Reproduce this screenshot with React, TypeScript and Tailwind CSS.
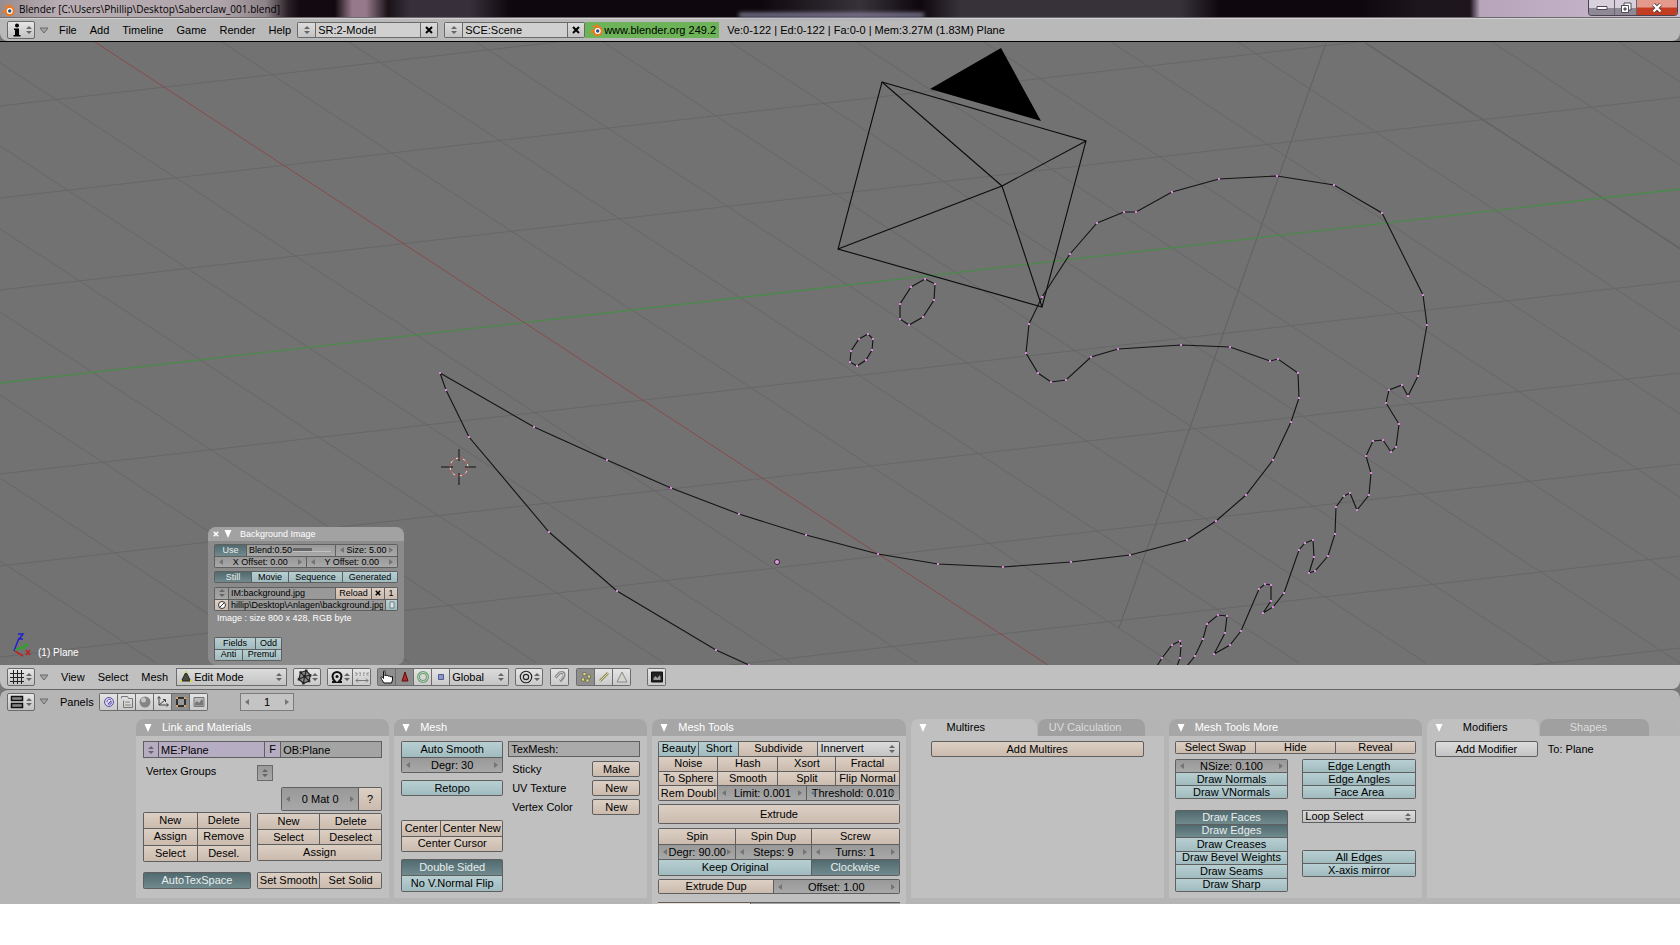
import type { ReactNode } from "react";
import { clsx } from "clsx";

type Tone = "tan" | "teal" | "on" | "grey" | "light" | "purple";

const tones: Record<Tone, string> = {
  tan: "bg-linear-to-b from-[#dccfc4] to-[#cbbbae] text-black",
  teal: "bg-linear-to-b from-[#b8cfd2] to-[#a0bbbf] text-black",
  on: "bg-linear-to-b from-[#516a6f] to-[#708a8e] text-[#e8eeee]",
  grey: "bg-linear-to-b from-[#999999] to-[#a8a8a8] text-black",
  light: "bg-linear-to-b from-[#dcdcdc] to-[#c4c4c4] text-black",
  purple: "bg-[#b7adc2] text-black",
};

function Btn({ tone = "tan", children, className, label }: { tone?: Tone; children?: ReactNode; className?: string; label?: string }) {
  return (
    <button
      type="button"
      aria-label={label}
      aria-pressed={tone === "on" ? true : undefined}
      className={clsx("flex min-h-0 min-w-0 items-center justify-center overflow-hidden whitespace-nowrap leading-none", tones[tone], className)}
    >
      {children}
    </button>
  );
}

function Group({ children, className }: { children: ReactNode; className?: string }) {
  return <div className={clsx("flex flex-col gap-px rounded-xs bg-[#5f5f5f] p-px", className)}>{children}</div>;
}

function Row({ children, cols }: { children: ReactNode; cols: string }) {
  return <div className={clsx("grid min-h-0 flex-1 gap-px", cols)}>{children}</div>;
}

function Num({ value, plain }: { value: string; plain?: boolean }) {
  return (
    <div className={clsx("relative flex min-h-0 min-w-0 items-stretch", plain ? "bg-[#c4c4c4]" : tones.grey)}>
      <input aria-label={value.split(":")[0]} defaultValue={value} className="h-full w-full min-w-0 bg-transparent text-center leading-none outline-none" />
      <svg viewBox="0 0 4 6" className="pointer-events-none absolute inset-y-0 left-1 my-auto h-1.5 w-1 fill-[#747474]">
        <path d="M4 0v6L0 3z" />
      </svg>
      <svg viewBox="0 0 4 6" className="pointer-events-none absolute inset-y-0 right-1 my-auto h-1.5 w-1 fill-[#747474]">
        <path d="M0 0v6l4-3z" />
      </svg>
    </div>
  );
}

function Field({ value, label, className }: { value: string; label: string; className?: string }) {
  return <input aria-label={label} defaultValue={value} className={clsx("h-full w-full min-w-0 px-0.5 leading-none outline-none", className)} />;
}

function UpDown({ className }: { className?: string }) {
  return (
    <svg viewBox="0 0 6 8" className={clsx("h-2 w-1.5 shrink-0 fill-[#666]", className)}>
      <path d="M3 0l3 3H0zM0 5h6L3 8z" />
    </svg>
  );
}

function Drop({ options, label, className }: { options: string[]; label: string; className?: string }) {
  return (
    <div className="relative min-h-0 min-w-0">
      <select aria-label={label} className={clsx("block h-full w-full appearance-none leading-none outline-none", tones.light, className)}>
        {options.map((o) => (
          <option key={o}>{o}</option>
        ))}
      </select>
      <UpDown className="pointer-events-none absolute inset-y-0 right-1 my-auto" />
    </div>
  );
}

function Triangle({ className }: { className?: string }) {
  return (
    <svg viewBox="0 0 8 8" className={clsx("h-2 w-2 shrink-0", className)}>
      <path d="M.5 0h7L4 8z" />
    </svg>
  );
}

function EditorType({ label, children }: { label: string; children: ReactNode }) {
  return (
    <button type="button" aria-label={label} className="flex h-[18px] w-7 shrink-0 items-center justify-between rounded-xs border border-[#6a6a6a] bg-linear-to-b from-[#e6e6e6] to-[#c2c2c2] px-0.5">
      {children}
      <UpDown />
    </button>
  );
}

function Collapse() {
  return (
    <button type="button" aria-label="Collapse menus" className="ml-1 flex h-4 w-3 shrink-0 items-center">
      <svg viewBox="0 0 10 7" className="h-[7px] w-2.5 fill-[#a4a4a4] stroke-[#6a6a6a]">
        <path d="M1 1h8L5 6z" />
      </svg>
    </button>
  );
}

function Menu({ items, className }: { items: string[]; className?: string }) {
  return (
    <nav className={clsx("flex shrink-0 gap-[13px]", className)}>
      {items.map((item) => (
        <button key={item} type="button" className="leading-4">
          {item}
        </button>
      ))}
    </nav>
  );
}

function BlenderLogo({ className }: { className?: string }) {
  return (
    <svg viewBox="0 0 14 12" className={clsx("h-3 w-3.5 shrink-0", className)}>
      <path d="M1 8l6-5H3V1.800h5L7 .6 8 0l5 4.200C15 8 12 12 8.500 12 5.500 12 4 10 4 8L2 9.200z" fill="#ee7a1c" />
      <circle cx="8.700" cy="7" r="3" fill="#fff" />
      <circle cx="8.700" cy="7" r="1.700" fill="#1f4f86" />
    </svg>
  );
}

function TitleBar() {
  return (
    <header className="relative flex h-[18px] items-start border-b border-[#6d6a6e] bg-[linear-gradient(90deg,#978d91_0,#b8adb2_60px,#b0a5ab_220px,#8d8288_266px,#2a2026_288px,#120a10_300px,#120a10_335px,#96798a_352px,#96798a_366px,#1a1217_388px,#37303a_410px,#37303a_470px,#0e070d_510px,#0e070d_760px,#37323a_860px,#0e070d_920px,#37323a_960px,#37323a_1080px,#37323a_1180px,#0e070d_1220px,#0e070d_1360px,#1d161d_1420px,#1d161d_1470px,#b7a4bb_1480px,#cdbdd0_1680px)]">
      <BlenderLogo className="mt-1 ml-px" />
      <h1 className="ml-1 font-['Open_Sans',sans-serif] text-[10px] leading-[18px] text-black">Blender [C:\Users\Phillip\Desktop\Saberclaw_001.blend]</h1>
      <div className="absolute bottom-0 left-[44%] h-1 w-[11%] bg-[#8d88a6] blur-[2px]" />
      <div className="mr-0.5 ml-auto flex h-4 overflow-hidden rounded-b-[4px] border border-t-0 border-[#4b4450]">
        <button type="button" aria-label="Minimize" className="flex w-[26px] items-center justify-center border-r border-[#6b6470] bg-linear-to-b from-[#d8d0dc] from-50% to-[#8f8896] to-55%">
          <svg viewBox="0 0 12 6" className="h-1.5 w-3">
            <path d="M1 1.500h10v3H1z" fill="#fff" stroke="#4e4a55" />
          </svg>
        </button>
        <button type="button" aria-label="Restore" className="flex w-[22px] items-center justify-center border-r border-[#6b6470] bg-linear-to-b from-[#d8d0dc] from-50% to-[#8f8896] to-55%">
          <svg viewBox="0 0 12 12" className="h-3 w-3" fill="#fff" stroke="#4e4a55">
            <path d="M4 1h7v7H4z" />
            <path d="M1.500 3.500h7v7h-7z" />
            <path d="M4 6h2v2H4z" fill="#7c7684" />
          </svg>
        </button>
        <button type="button" aria-label="Close" className="flex w-10 items-center justify-center bg-linear-to-b from-[#e39a8c] from-45% to-[#c33d22] to-55%">
          <svg viewBox="0 0 12 10" className="h-2.5 w-3">
            <path d="M2.500 1.500l7 7m0-7l-7 7" stroke="#5c3a3a" strokeWidth="4" />
            <path d="M2.500 1.500l7 7m0-7l-7 7" stroke="#fff" strokeWidth="2.400" />
          </svg>
        </button>
      </div>
    </header>
  );
}

function DataBlock({ label, value }: { label: string; value: string }) {
  return (
    <div className="grid h-4 w-[141px] shrink-0 grid-cols-[17px_1fr_16px] gap-px rounded-xs bg-[#6a6a6a] p-px">
      <Btn tone="light" label={`Browse ${label}`}>
        <UpDown />
      </Btn>
      <Field label={label} value={value} className="bg-[#d0d0d0]" />
      <Btn tone="light" label={`Delete ${label}`}>
        <svg viewBox="0 0 8 8" className="h-2 w-2 stroke-black stroke-2">
          <path d="M1 1l6 6M7 1l-6 6" />
        </svg>
      </Btn>
    </div>
  );
}

function InfoHeader() {
  return (
    <div className="bg-[#777]">
      <div className="flex h-[23px] items-center rounded-b-lg border-t border-[#d2d2d2] bg-[#b9b9b9] pl-[7px]">
        <EditorType label="Editor type: info">
          <svg viewBox="0 0 14 14" className="h-3.5 w-3.5 fill-black">
            <circle cx="7" cy="2.500" r="2" />
            <path d="M4 5.500h5V12h1.500v1.500h-7V12H5V7H4z" />
          </svg>
        </EditorType>
        <Collapse />
        <Menu items={["File", "Add", "Timeline", "Game", "Render", "Help"]} className="ml-2" />
        <div className="ml-1.5 flex shrink-0 gap-1.5">
          <DataBlock label="Screen" value="SR:2-Model" />
          <DataBlock label="Scene" value="SCE:Scene" />
        </div>
        <a href="#blender" className="flex h-4 w-[134px] shrink-0 items-center gap-px bg-[#6cb457] pl-1 whitespace-nowrap">
          <BlenderLogo />
          www.blender.org 249.2
        </a>
        <p className="ml-2 truncate">Ve:0-122 | Ed:0-122 | Fa:0-0 | Mem:3.27M (1.83M) Plane</p>
      </div>
    </div>
  );
}

const claw =
  "749,665 716,650 617,591 549,532 469,437 446,390 440,373 534,427 607,460 671,488 739,514 806,535 878,554 938,564 1003,567 1071,562 1130,555 1187,540 1216,521 1246,495 1273,460 1291,422 1299,398 1298,373 1278,359 1270,361 1230,347 1181,345 1118,349 1091,357 1066,380 1051,382 1038,373 1026,353 1029,324 1042,297 1070,254 1097,223 1124,212 1136,212 1172,192 1219,179 1277,176 1334,185 1382,213 1423,295 1427,325 1418,376 1408,396 1402,385 1389,390 1386,403 1399,424 1396,447 1391,452 1383,440 1373,441 1366,456 1371,473 1369,495 1357,510 1350,493 1344,496 1336,507 1335,534 1328,556 1315,571 1309,573 1314,557 1313,540 1305,543 1299,550 1284,593 1273,607 1263,613 1271,601 1271,585 1265,584 1259,589 1241,631 1230,645 1214,654 1225,633 1227,616 1218,615 1207,624 1203,639 1195,656 1187,666";
const tooth = "1177,666 1180,658 1181,646 1180,641 1172,645 1162,658 1157,666";
const bigRing = "925,279 935,284 934,300 923,317 909,325 900,319 900,304 911,287 925,279";
const smallRing = "868,334 873,339 872,350 866,360 857,366 850,362 851,351 859,339 868,334";

function MeshLine({ points }: { points: string }) {
  return (
    <g>
      <polyline points={points} fill="none" stroke="#141414" strokeWidth="1.100" />
      {points.split(" ").map((p, i) => {
        const [x, y] = p.split(",").map(Number);
        return <rect key={i} x={x - 1} y={y - 1} width="2" height="2" fill="#d987dd" />;
      })}
    </g>
  );
}

function Scene() {
  // floor grid: one family runs along Y (shallow), the other along X (steep)
  const alongY = [106, 198, 290, 474, 566, 657, 749, 841];
  const alongX = Array.from({ length: 20 }, (_, i) => i - 7).filter((i) => i !== 0);
  return (
    <svg viewBox="0 42 1680 623" className="block h-auto w-full bg-[#727272]">
      <g stroke="#676767" strokeWidth="1">
        {alongY.map((y) => (
          <line key={y} x1="0" y1={y} x2="1680" y2={y - 193} />
        ))}
        {alongX.map((i) => (
          <line key={i} x1={95 + i * 127} y1="42" x2={1045 + i * 127} y2="663" />
        ))}
        <line x1="1326" y1="43" x2="1119" y2="628" stroke="#606060" />
        <line x1="1365" y1="43" x2="1680" y2="249" stroke="#606060" />
      </g>
      <line x1="0" y1="383" x2="1680" y2="189" stroke="#4b8a4b" strokeWidth="1.300" />
      <line x1="95" y1="42" x2="1048" y2="665" stroke="#8a4a4c" />

      <g fill="none" stroke="#0c0c0c" strokeWidth="1.100">
        <path d="M882 82L1086 141L1042 307L838 249Z" />
        <path d="M882 82L1002 186L1086 141M838 249L1002 186L1042 307" />
      </g>
      <path d="M930 89L1001 48L1041 121Z" fill="#000" />

      <MeshLine points={claw} />
      <MeshLine points={tooth} />
      <MeshLine points={bigRing} />
      <MeshLine points={smallRing} />
      <circle cx="777" cy="562" r="2.500" fill="#d8a8dc" stroke="#3a1a3c" />

      <circle cx="459" cy="467" r="9" fill="none" stroke="#e8d8d8" />
      <circle cx="459" cy="467" r="9" fill="none" stroke="#b03030" strokeDasharray="4 3" />
      <path d="M441 467h12M465 467h11M459 449v12M459 473v12" stroke="#111" />

      <g fill="none" strokeWidth="1.500">
        <path d="M14 651L19 638M18 634h5l-4 5h4" stroke="#2020d0" />
        <path d="M15 651L23 656M26 650l4 5m0-5l-4 5" stroke="#c02020" />
        <path d="M15 650L23 647M23 644l2 2 3-2M25 646l-2 4" stroke="#20b020" />
      </g>
    </svg>
  );
}

function BackgroundPanel() {
  return (
    <section className="absolute bottom-0 left-[208px] w-[196px] overflow-hidden rounded-lg bg-[#8b8b8b] pb-1 text-[9px]">
      <header className="flex h-3.5 items-center bg-[#a2a2a2] pl-[5px] text-white">
        <button type="button" aria-label="Close panel">
          <svg viewBox="0 0 8 8" className="h-1.5 w-1.5 stroke-white stroke-2">
            <path d="M1 1l6 6M7 1l-6 6" />
          </svg>
        </button>
        <Triangle className="ml-[5px] fill-white" />
        <h2 className="ml-2">Background Image</h2>
      </header>
      <div className="flex flex-col px-1.5 pt-[3px]">
        <Group className="h-6">
          <Row cols="grid-cols-[31px_1fr_61px]">
            <Btn tone="on">Use</Btn>
            <label className={clsx("flex min-w-0 items-center pl-0.5", tones.grey)}>
              Blend:0.50
              <span className="mr-1 ml-px flex h-1 flex-1 items-center border-b border-[#c2c2c2] bg-linear-to-r from-[#666] from-50% to-[#a2a2a2] to-50%">
                <input type="range" defaultValue={50} className="w-full opacity-0" />
              </span>
            </label>
            <Num value="Size: 5.00" />
          </Row>
          <Row cols="grid-cols-2">
            <Num value="X Offset: 0.00" />
            <Num value="Y Offset: 0.00" />
          </Row>
        </Group>
        <Group className="mt-[3px] h-3">
          <Row cols="grid-cols-[36px_36px_1fr_54px]">
            <Btn tone="on">Still</Btn>
            <Btn tone="teal">Movie</Btn>
            <Btn tone="teal">Sequence</Btn>
            <Btn tone="teal">Generated</Btn>
          </Row>
        </Group>
        <Group className="mt-1 h-6">
          <Row cols="grid-cols-[13px_1fr_35px_12px_12px]">
            <Btn tone="grey" label="Browse images">
              <UpDown />
            </Btn>
            <Field label="Image name" value="IM:background.jpg" className="bg-[#999]" />
            <Btn>Reload</Btn>
            <Btn label="Unlink image">
              <svg viewBox="0 0 8 8" className="h-1.5 w-1.5 stroke-black stroke-2">
                <path d="M1 1l6 6M7 1l-6 6" />
              </svg>
            </Btn>
            <Btn>1</Btn>
          </Row>
          <Row cols="grid-cols-[13px_1fr_11px]">
            <Btn label="Open image">
              <svg viewBox="0 0 10 10" className="h-2.5 w-2.5 fill-white stroke-[#333]">
                <circle cx="5" cy="5" r="3.500" />
                <path d="M2.500 7.500l5-5" />
              </svg>
            </Btn>
            <Field label="Image path" value="hillip\Desktop\Anlagen\background.jpg" className="bg-[#999]" />
            <Btn tone="teal" label="Pack image">
              <svg viewBox="0 0 6 8" className="h-2 w-1.5 fill-[#dfe8e8] stroke-[#6d8184]">
                <path d="M1 1h4v6H1z" />
              </svg>
            </Btn>
          </Row>
        </Group>
        <p className="pl-[3px] leading-[14px] text-white">Image : size 800 x 428, RGB byte</p>
        <Group className="mt-3 h-6 w-[68px]">
          <Row cols="grid-cols-[40px_1fr]">
            <Btn tone="teal">Fields</Btn>
            <Btn tone="teal">Odd</Btn>
          </Row>
          <Row cols="grid-cols-[27px_1fr]">
            <Btn tone="teal">Anti</Btn>
            <Btn tone="teal">Premul</Btn>
          </Row>
        </Group>
      </div>
    </section>
  );
}

function Tool({ label, active, children }: { label: string; active?: boolean; children: ReactNode }) {
  return (
    <button type="button" aria-label={label} aria-pressed={active} className={clsx("flex h-4 w-[17px] items-center justify-center", active ? "bg-[#8e8e8e]" : "bg-linear-to-b from-[#e4e4e4] to-[#cacaca]")}>
      <svg viewBox="0 0 14 14" className="h-3.5 w-3.5 fill-none">
        {children}
      </svg>
    </button>
  );
}

function ToolBox({ children, className }: { children: ReactNode; className?: string }) {
  return <div className={clsx("flex h-[18px] shrink-0 items-center gap-px rounded-xs bg-[#6c6c6c] p-px", className)}>{children}</div>;
}

function ToolDrop({ label, children, className }: { label: string; children: ReactNode; className?: string }) {
  return (
    <button type="button" aria-label={label} className={clsx("flex h-[18px] w-7 shrink-0 items-center justify-between rounded-xs border border-[#6c6c6c] bg-linear-to-b from-[#e4e4e4] to-[#cacaca] px-0.5", className)}>
      <svg viewBox="0 0 14 14" className="h-4 w-4 fill-none">
        {children}
      </svg>
      <UpDown />
    </button>
  );
}

function ViewHeader() {
  return (
    <div className="bg-[#777]">
      <div className="flex h-6 items-center rounded-b-lg bg-[#c0c0c0] pl-[7px]">
        <EditorType label="Editor type: 3D view">
          <svg viewBox="0 0 14 14" className="h-3.5 w-3.5 stroke-[#222]">
            <path d="M3.500 0v14M7.500 0v14M11.500 0v14M0 3.500h14M0 7.500h14M0 11.500h14" />
          </svg>
        </EditorType>
        <Collapse />
        <Menu items={["View", "Select", "Mesh"]} className="ml-2.5" />
        <div className="relative ml-2 grid h-[18px] w-[111px] shrink-0 bg-[#6c6c6c] p-px">
          <Drop label="Mode" options={["Edit Mode", "Object Mode"]} className="pl-[17px]" />
          <svg viewBox="0 0 12 12" className="pointer-events-none absolute top-[3px] left-1 h-3 w-3">
            <path d="M6 1l4.500 9h-9z" fill="#4a4a3c" stroke="#222" />
            <path d="M5 0h2v2H5zM0 9h2v2H0zM10 9h2v2h-2z" fill="#d8d840" />
          </svg>
        </div>
        <ToolDrop label="Draw type" className="ml-1.5">
          <path d="M4 3l5-1.500 3.500 4-1 5-5 2-4-3.500z" fill="#8a8a8a" stroke="#222" />
          <path d="M4 3l3.500 3.500 5-1M7.500 6.500l-1 6M2.500 9l5-2.500M9 1.500L7.500 6.500l4 4" stroke="#222" />
          <path d="M3 2h2v2H3zM8 .5h2v2H8zM11.500 4.500h2v2h-2zM10.500 9.500h2v2h-2zM5.500 11.500h2v2h-2zM1.500 8h2v2h-2zM6.500 5.500h2v2h-2z" fill="#222" />
        </ToolDrop>
        <ToolBox className="ml-1.5">
          <button type="button" aria-label="Pivot" className="flex h-4 w-6 items-center justify-between bg-linear-to-b from-[#e4e4e4] to-[#cacaca] px-0.5">
            <svg viewBox="0 0 14 14" className="h-3.5 w-3.5 fill-none">
              <path d="M2 12h3.500C3.500 10 2.500 8.500 2.500 6.500a4.500 4.500 0 019 0c0 2-1 3.500-3 5.500H12" stroke="#111" strokeWidth="2" />
              <circle cx="7" cy="6.500" r="1.500" fill="#111" />
            </svg>
            <UpDown />
          </button>
          <Tool label="Move object centers">
            <path d="M1 4h2M5 4h1M8 4h1M11 4h2M1 2v4M5 2v4M9 2v4M13 2v4" stroke="#8a8a8a" strokeDasharray="2 1" />
            <path d="M1 10.500h12M3 8.500l-2 2 2 2M11 8.500l2 2-2 2" stroke="#777" />
          </Tool>
        </ToolBox>
        <ToolBox className="ml-1.5">
          <Tool label="Manipulator" active>
            <path d="M4 13C2 10 1 8.500 1 7.500s1.500-1 2.500 1V1.500c0-1 1.500-1 1.500 0V6c0-1 1.800-1 1.800 0 0-1 1.800-1 1.800.3C9 5.500 10.500 6 10.500 7l2-.5V10l-1 3z" fill="#fff" stroke="#111" />
          </Tool>
          <Tool label="Translate" active>
            <path d="M7 2l3 9H4z" fill="#b82a2a" stroke="#5c1010" />
          </Tool>
          <Tool label="Rotate">
            <circle cx="7" cy="7" r="4.500" stroke="#6f9c72" strokeWidth="3" />
            <circle cx="7" cy="7" r="4.500" stroke="#b9d8ba" />
          </Tool>
          <Tool label="Scale">
            <path d="M4.500 4.500h5v5h-5z" fill="#8a96cc" stroke="#4e5a90" />
          </Tool>
          <div className="grid h-4 w-[58px]">
            <Drop label="Orientation" options={["Global", "Local"]} className="pl-0.5" />
          </div>
        </ToolBox>
        <ToolDrop label="Proportional editing" className="ml-1.5">
          <circle cx="7" cy="7" r="5" stroke="#222" />
          <circle cx="7" cy="7" r="2.300" stroke="#222" />
        </ToolDrop>
        <ToolBox className="ml-[7px]">
          <Tool label="Snap">
            <path d="M2.500 7.500l3-3.500c2-2.500 6-2 5.500 1.500-.5 2-2 4-4 5.500" stroke="#8a8a8a" strokeWidth="3" />
            <path d="M3 7l3-3.500c2-2 5-1.500 4.500 1.500-.5 2-2 3.500-3.500 5" stroke="#d8d8d8" />
          </Tool>
        </ToolBox>
        <ToolBox className="ml-[7px]">
          <Tool label="Vertex select" active>
            <path d="M4 2.500h3v3H4zM8.500 5h3v3h-3zM2.500 8h3v3h-3zM7 9h3v3H7z" fill="#dcd98a" stroke="#5c5a34" strokeWidth=".6" />
          </Tool>
          <Tool label="Edge select">
            <path d="M3 11l8-8" stroke="#8c8a5a" strokeWidth="2.500" />
            <path d="M3 11l8-8" stroke="#e2dfa4" />
          </Tool>
          <Tool label="Face select">
            <path d="M7 2l5 10H2z" fill="#d4d4cc" stroke="#888" />
          </Tool>
        </ToolBox>
        <ToolBox className="ml-4">
          <Tool label="Render this window">
            <path d="M1.500 2h11v10h-11z" fill="#222" stroke="#111" />
            <path d="M3.500 10V8l2-2 2 2 2-3 1 1.500V10z" fill="#999" />
          </Tool>
        </ToolBox>
      </div>
    </div>
  );
}

function ButtonsHeader() {
  return (
    <div className="flex h-[29px] items-start pt-[3px] pl-[7px]">
      <EditorType label="Editor type: buttons">
        <svg viewBox="0 0 14 14" className="h-3.5 w-3.5">
          <path d="M1.500 1.500h11v4h-11zM1.500 8.500h11v4h-11z" fill="#888" stroke="#111" strokeWidth="1.500" />
        </svg>
      </EditorType>
      <Collapse />
      <span className="ml-2 w-10 shrink-0 pl-px leading-[18px]">Panels</span>
      <ToolBox>
        <Tool label="Logic">
          <circle cx="7" cy="7" r="4.500" fill="#d5cff0" stroke="#5a4fa0" />
          <path d="M5 7a2.500 2.500 0 014-2M6 9h3V6z" fill="#fff" stroke="#5a4fa0" />
        </Tool>
        <Tool label="Script">
          <path d="M1.500 3.500v-2h6l1 2h4v9h-9v-7" stroke="#777" />
          <path d="M5 7h5M5 10h6" stroke="#888" />
        </Tool>
        <Tool label="Shading">
          <circle cx="7" cy="7" r="5.500" fill="#858585" />
          <circle cx="5.500" cy="5" r="2.500" fill="#c4c4c4" />
        </Tool>
        <Tool label="Object">
          <path d="M3 2v8h9M3 10l6-5M1.500 3.500L3 1.500l1.500 2M10.500 8.500l2 1.500-2 1.500M7 4.500h2.500V7" stroke="#444" />
        </Tool>
        <Tool label="Editing" active>
          <path d="M3 3h8v8H3z" fill="#999" stroke="#111" strokeWidth="1.500" />
          <path d="M2 2h2v2H2zM10 2h2v2h-2zM2 10h2v2H2zM10 10h2v2h-2z" fill="#d8a060" />
        </Tool>
        <Tool label="Scene">
          <path d="M2 2.500h10v9H2z" fill="#bbb" stroke="#777" />
          <path d="M3 10.500V8l2-2 2 2 3-4 1 2v4.500z" fill="#777" />
        </Tool>
      </ToolBox>
      <div className="ml-8 flex h-[18px] w-[54px] shrink-0 border border-[#7c7c7c]">
        <Num value="1" plain />
      </div>
    </div>
  );
}

function Panel({ title, full, children }: { title: string; full?: boolean; children: ReactNode }) {
  return (
    <section className={clsx("min-w-0 flex-1 rounded-t-lg bg-[#c0c0c0]", !full && "mb-1.5")}>
      <header className="flex h-[17px] items-center gap-2.5 rounded-t-lg bg-[#a6a6a6] pl-2 text-white">
        <Triangle className="fill-white" />
        <h2>{title}</h2>
      </header>
      {children}
    </section>
  );
}

function TabPanel({ tabs, cols, children }: { tabs: string[]; cols: string; children: ReactNode }) {
  return (
    <section className="mb-1.5 min-w-0 flex-1 rounded-t-lg bg-[#c0c0c0]">
      <header role="tablist" className={clsx("grid h-[17px] gap-px rounded-t-lg bg-[#b4b4b4]", cols)}>
        <button type="button" role="tab" aria-selected="true" className="flex items-center rounded-t-lg bg-[#c0c0c0] pl-2 text-black">
          <Triangle className="fill-white" />
          <span className="ml-5">{tabs[0]}</span>
        </button>
        <button type="button" role="tab" aria-selected="false" className="rounded-t-lg bg-[#a0a0a0] pr-3 text-[#dcdcdc]">
          {tabs[1]}
        </button>
      </header>
      {children}
    </section>
  );
}

function LinkPanel() {
  return (
    <Panel title="Link and Materials">
      <div className="flex flex-col px-[7px] pt-[5px] pb-2">
        <div className="grid h-[17px] grid-cols-[14px_1fr_15px_100px] gap-px bg-[#5f5f5f] p-px">
          <Btn tone="purple" label="Browse mesh">
            <UpDown />
          </Btn>
          <Field label="Mesh name" value="ME:Plane" className="bg-[#b7adc2]" />
          <Btn tone="purple">F</Btn>
          <Field label="Object name" value="OB:Plane" className="bg-[#a4a4a4]" />
        </div>
        <div className="mt-[7px] flex h-4 items-start pl-[3px]">
          <span className="w-[111px] leading-3">Vertex Groups</span>
          <Btn tone="grey" label="Browse vertex groups" className="h-4 w-4 border border-[#6a6a6a]">
            <UpDown />
          </Btn>
        </div>
        <Group className="mt-1.5 ml-auto h-6 w-[101px]">
          <Row cols="grid-cols-[1fr_22px]">
            <Num value="0 Mat 0" />
            <Btn>?</Btn>
          </Row>
        </Group>
        <div className="mt-px grid grid-cols-[108px_1fr] items-center gap-1.5">
          <Group className="h-[50px]">
            <Row cols="grid-cols-2"><Btn>New</Btn><Btn>Delete</Btn></Row>
            <Row cols="grid-cols-2"><Btn>Assign</Btn><Btn>Remove</Btn></Row>
            <Row cols="grid-cols-2"><Btn>Select</Btn><Btn>Desel.</Btn></Row>
          </Group>
          <Group className="h-12">
            <Row cols="grid-cols-2"><Btn>New</Btn><Btn>Delete</Btn></Row>
            <Row cols="grid-cols-2"><Btn>Select</Btn><Btn>Deselect</Btn></Row>
            <Row cols="grid-cols-1"><Btn>Assign</Btn></Row>
          </Group>
        </div>
        <div className="mt-2.5 grid grid-cols-[108px_1fr] gap-1.5">
          <Group className="h-[17px]">
            <Row cols="grid-cols-1"><Btn tone="on">AutoTexSpace</Btn></Row>
          </Group>
          <Group className="h-[17px]">
            <Row cols="grid-cols-2"><Btn>Set Smooth</Btn><Btn>Set Solid</Btn></Row>
          </Group>
        </div>
      </div>
    </Panel>
  );
}

function MeshPanel() {
  return (
    <Panel title="Mesh">
      <div className="grid grid-cols-[102px_1fr] gap-[5px] px-[7px] pt-[5px] pb-1.5">
        <div className="flex flex-col">
          <Group className="h-8">
            <Row cols="grid-cols-1"><Btn tone="teal">Auto Smooth</Btn></Row>
            <Row cols="grid-cols-1"><Num value="Degr: 30" /></Row>
          </Group>
          <Group className="mt-[7px] h-4">
            <Row cols="grid-cols-1"><Btn tone="teal">Retopo</Btn></Row>
          </Group>
          <Group className="mt-6 h-8">
            <Row cols="grid-cols-[38px_1fr]"><Btn>Center</Btn><Btn>Center New</Btn></Row>
            <Row cols="grid-cols-1"><Btn>Center Cursor</Btn></Row>
          </Group>
          <Group className="mt-[7px] h-[33px]">
            <Row cols="grid-cols-1"><Btn tone="on">Double Sided</Btn></Row>
            <Row cols="grid-cols-1"><Btn tone="teal">No V.Normal Flip</Btn></Row>
          </Group>
        </div>
        <div className="flex flex-col">
          <div className="h-4 border border-[#5f5f5f]">
            <Field label="Texture mesh" value="TexMesh:" className="bg-[#aaa]" />
          </div>
          <div className="mt-1 flex flex-col gap-[3px] pl-1">
            {[["Sticky", "Make"], ["UV Texture", "New"], ["Vertex Color", "New"]].map(([name, action]) => (
              <div key={name} className="flex h-4 items-center justify-between">
                <span>{name}</span>
                <Btn label={`${action} ${name}`} className="h-4 w-12 rounded-xs border border-[#5f5f5f]">{action}</Btn>
              </div>
            ))}
          </div>
        </div>
      </div>
    </Panel>
  );
}

function MeshToolsPanel() {
  return (
    <Panel title="Mesh Tools" full>
      <div className="flex flex-col px-1.5 pt-[5px]">
        <Group className="h-[60px]">
          <Row cols="grid-cols-[39fr_39fr_78fr_80fr]">
            <Btn tone="teal">Beauty</Btn>
            <Btn tone="teal">Short</Btn>
            <Btn>Subdivide</Btn>
            <Drop label="Corner cut type" options={["Innervert", "Path", "Fan"]} className="pl-0.5" />
          </Row>
          <Row cols="grid-cols-[58fr_59fr_57fr_62fr]"><Btn>Noise</Btn><Btn>Hash</Btn><Btn>Xsort</Btn><Btn>Fractal</Btn></Row>
          <Row cols="grid-cols-[58fr_59fr_57fr_62fr]"><Btn>To Sphere</Btn><Btn>Smooth</Btn><Btn>Split</Btn><Btn>Flip Normal</Btn></Row>
          <Row cols="grid-cols-[58fr_88fr_91fr]"><Btn>Rem Doubl</Btn><Num value="Limit: 0.001" /><Num value="Threshold: 0.010" /></Row>
        </Group>
        <Group className="mt-[3px] h-5">
          <Row cols="grid-cols-1"><Btn>Extrude</Btn></Row>
        </Group>
        <Group className="mt-1 h-12">
          <Row cols="grid-cols-[76fr_75fr_87fr]"><Btn>Spin</Btn><Btn>Spin Dup</Btn><Btn>Screw</Btn></Row>
          <Row cols="grid-cols-[76fr_75fr_87fr]"><Num value="Degr: 90.00" /><Num value="Steps: 9" /><Num value="Turns: 1" /></Row>
          <Row cols="grid-cols-[152fr_87fr]"><Btn tone="teal">Keep Original</Btn><Btn tone="on">Clockwise</Btn></Row>
        </Group>
        <Group className="mt-[3px] h-[15px]">
          <Row cols="grid-cols-[114fr_125fr]"><Btn>Extrude Dup</Btn><Num value="Offset: 1.00" /></Row>
        </Group>
        <div className="mt-2 grid h-0.5 grid-cols-[91fr_148fr] gap-px border-t border-[#5f5f5f] bg-[#5f5f5f]">
          <div className="bg-[#e6ddd6]" />
          <div className="bg-[#a4a4a4]" />
        </div>
      </div>
    </Panel>
  );
}

const drawToggles: [string, Tone][] = [
  ["Draw Faces", "on"],
  ["Draw Edges", "on"],
  ["Draw Creases", "teal"],
  ["Draw Bevel Weights", "teal"],
  ["Draw Seams", "teal"],
  ["Draw Sharp", "teal"],
];

function MeshToolsMorePanel() {
  return (
    <Panel title="Mesh Tools More">
      <div className="px-1.5 pt-[5px] pb-1.5">
        <Group className="h-[13px]">
          <Row cols="grid-cols-3"><Btn>Select Swap</Btn><Btn>Hide</Btn><Btn>Reveal</Btn></Row>
        </Group>
        <div className="mt-[5px] grid grid-cols-2 gap-3.5">
          <div className="flex flex-col">
            <Group className="h-10">
              <Row cols="grid-cols-1"><Num value="NSize: 0.100" /></Row>
              <Row cols="grid-cols-1"><Btn tone="teal">Draw Normals</Btn></Row>
              <Row cols="grid-cols-1"><Btn tone="teal">Draw VNormals</Btn></Row>
            </Group>
            <Group className="mt-[11px] h-[82px]">
              {drawToggles.map(([name, tone]) => (
                <Btn key={name} tone={tone} className="flex-1">{name}</Btn>
              ))}
            </Group>
          </div>
          <div className="flex flex-col">
            <Group className="h-10">
              <Btn tone="teal" className="flex-1">Edge Length</Btn>
              <Btn tone="teal" className="flex-1">Edge Angles</Btn>
              <Btn tone="teal" className="flex-1">Face Area</Btn>
            </Group>
            <div className="mt-[11px] grid h-[13px] bg-[#5f5f5f] p-px">
              <Drop label="Select mode" options={["Loop Select", "Ring Select"]} className="pl-0.5" />
            </div>
            <Group className="mt-[27px] h-[27px]">
              <Btn tone="teal" className="flex-1">All Edges</Btn>
              <Btn tone="teal" className="flex-1">X-axis mirror</Btn>
            </Group>
          </div>
        </div>
      </div>
    </Panel>
  );
}

export default function App() {
  return (
    <div className="min-h-screen bg-white font-['Liberation_Sans',Arial,sans-serif] text-[11px] leading-none text-black">
      <TitleBar />
      <InfoHeader />
      <main className="relative border-t border-black">
        <Scene />
        <BackgroundPanel />
        <p className="absolute bottom-[7px] left-[38px] text-[10px] text-white">(1) Plane</p>
      </main>
      <ViewHeader />
      <div className="bg-[#777]">
        <div className="rounded-t-lg border-t border-[#666] bg-[#b5b5b5]">
          <ButtonsHeader />
          <div className="flex items-stretch gap-[5px] pl-[136px]">
            <LinkPanel />
            <MeshPanel />
            <MeshToolsPanel />
            <TabPanel tabs={["Multires", "UV Calculation"]} cols="grid-cols-[126px_1fr_18px]">
              <div className="px-5 pt-[5px]">
                <Btn className="h-4 w-full rounded-xs border border-[#5f5f5f]">Add Multires</Btn>
              </div>
            </TabPanel>
            <MeshToolsMorePanel />
            <TabPanel tabs={["Modifiers", "Shapes"]} cols="grid-cols-[112px_1fr_30px]">
              <div className="flex items-center gap-2.5 px-2 pt-[5px]">
                <Btn tone="light" className="h-4 w-[103px] rounded-xs border border-[#5f5f5f]">Add Modifier</Btn>
                <span>To: Plane</span>
              </div>
            </TabPanel>
          </div>
        </div>
      </div>
    </div>
  );
}
